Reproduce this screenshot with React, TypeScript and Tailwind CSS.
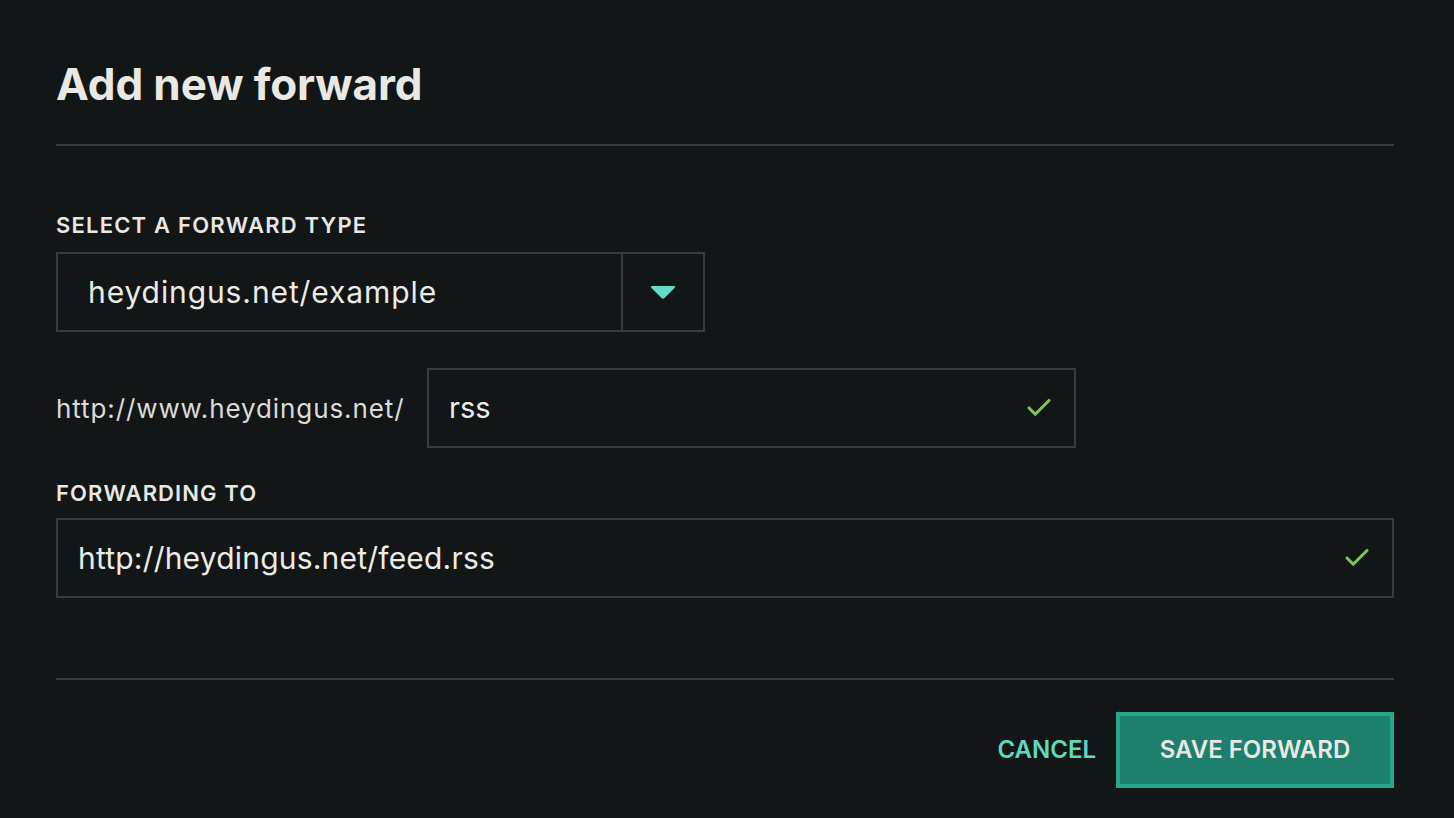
import { Check } from 'lucide-react';

const App = () => {
    return (
        <div className="min-h-[818px] w-full bg-[#121617] pl-14 pr-[60px] pt-[58px] text-[#ecebe8]" style={{ fontFamily: 'Inter, "Noto Sans", sans-serif' }}>
            {/* Header */}
            <h1 className="text-[44px] leading-[52px] font-bold tracking-[-0.1px] text-[#eae8e4]">Add new forward</h1>
            <div className="mt-[34px] h-[2px] bg-[#343b41]" />

            {/* Forward type */}
            <div className="mt-[66px] text-[22px] leading-[26px] font-semibold tracking-[1.2px] text-[#e8e7e4]">SELECT A FORWARD TYPE</div>
            <div className="mt-[14px] flex h-[80px] w-[649px] border-2 border-[#353d44]">
                <div className="flex flex-1 items-center pl-[30px] text-[30px] tracking-[0.9px] text-[#ecebe8]">heydingus.net/example</div>
                <div className="flex w-[82px] items-center justify-center border-l-2 border-[#353d44]">
                    <svg width="30" height="18" viewBox="0 0 30 18">
                        <path d="M4 3 H26 Q28 3 26.5 5 L16.5 15 Q15 16.5 13.5 15 L3.5 5 Q2 3 4 3 Z" fill="#62dcc6" />
                    </svg>
                </div>
            </div>

            {/* Slug */}
            <div className="mt-[36px] flex items-center">
                <div className="w-[371px] text-[26px] tracking-[0.9px] text-[#dcdbd8]">http://www.heydingus.net/</div>
                <div className="flex h-[80px] w-[649px] items-center justify-between border-2 border-[#353d44] pl-[20px] pr-[20px]">
                    <span className="text-[29px] text-[#ecebe8]">rss</span>
                    <Check className="h-[30px] w-[30px] text-[#7cc453]" strokeWidth={2.5} />
                </div>
            </div>

            {/* Forwarding to */}
            <div className="mt-[32px] text-[22px] leading-[26px] font-semibold tracking-[1.1px] text-[#e8e7e4]">FORWARDING TO</div>
            <div className="mt-[12px] flex h-[80px] items-center justify-between border-2 border-[#353d44] pl-[20px] pr-[20px]">
                <span className="text-[30px] tracking-[0.2px] text-[#ecebe8]">http://heydingus.net/feed.rss</span>
                <Check className="h-[30px] w-[30px] text-[#7cc453]" strokeWidth={2.5} />
            </div>

            <div className="mt-[80px] h-[2px] bg-[#343b41]" />

            {/* Actions */}
            <div className="mt-[32px] flex items-center justify-end gap-[20px]">
                <button className="text-[24px] font-semibold text-[#5fd8c2]">CANCEL</button>
                <button className="h-[76px] w-[278px] border-4 border-[#23a88b] bg-[#1d7f6c] text-[24px] font-semibold text-[#eae8e4]">SAVE FORWARD</button>
            </div>
        </div>
    );
};

export default App;
